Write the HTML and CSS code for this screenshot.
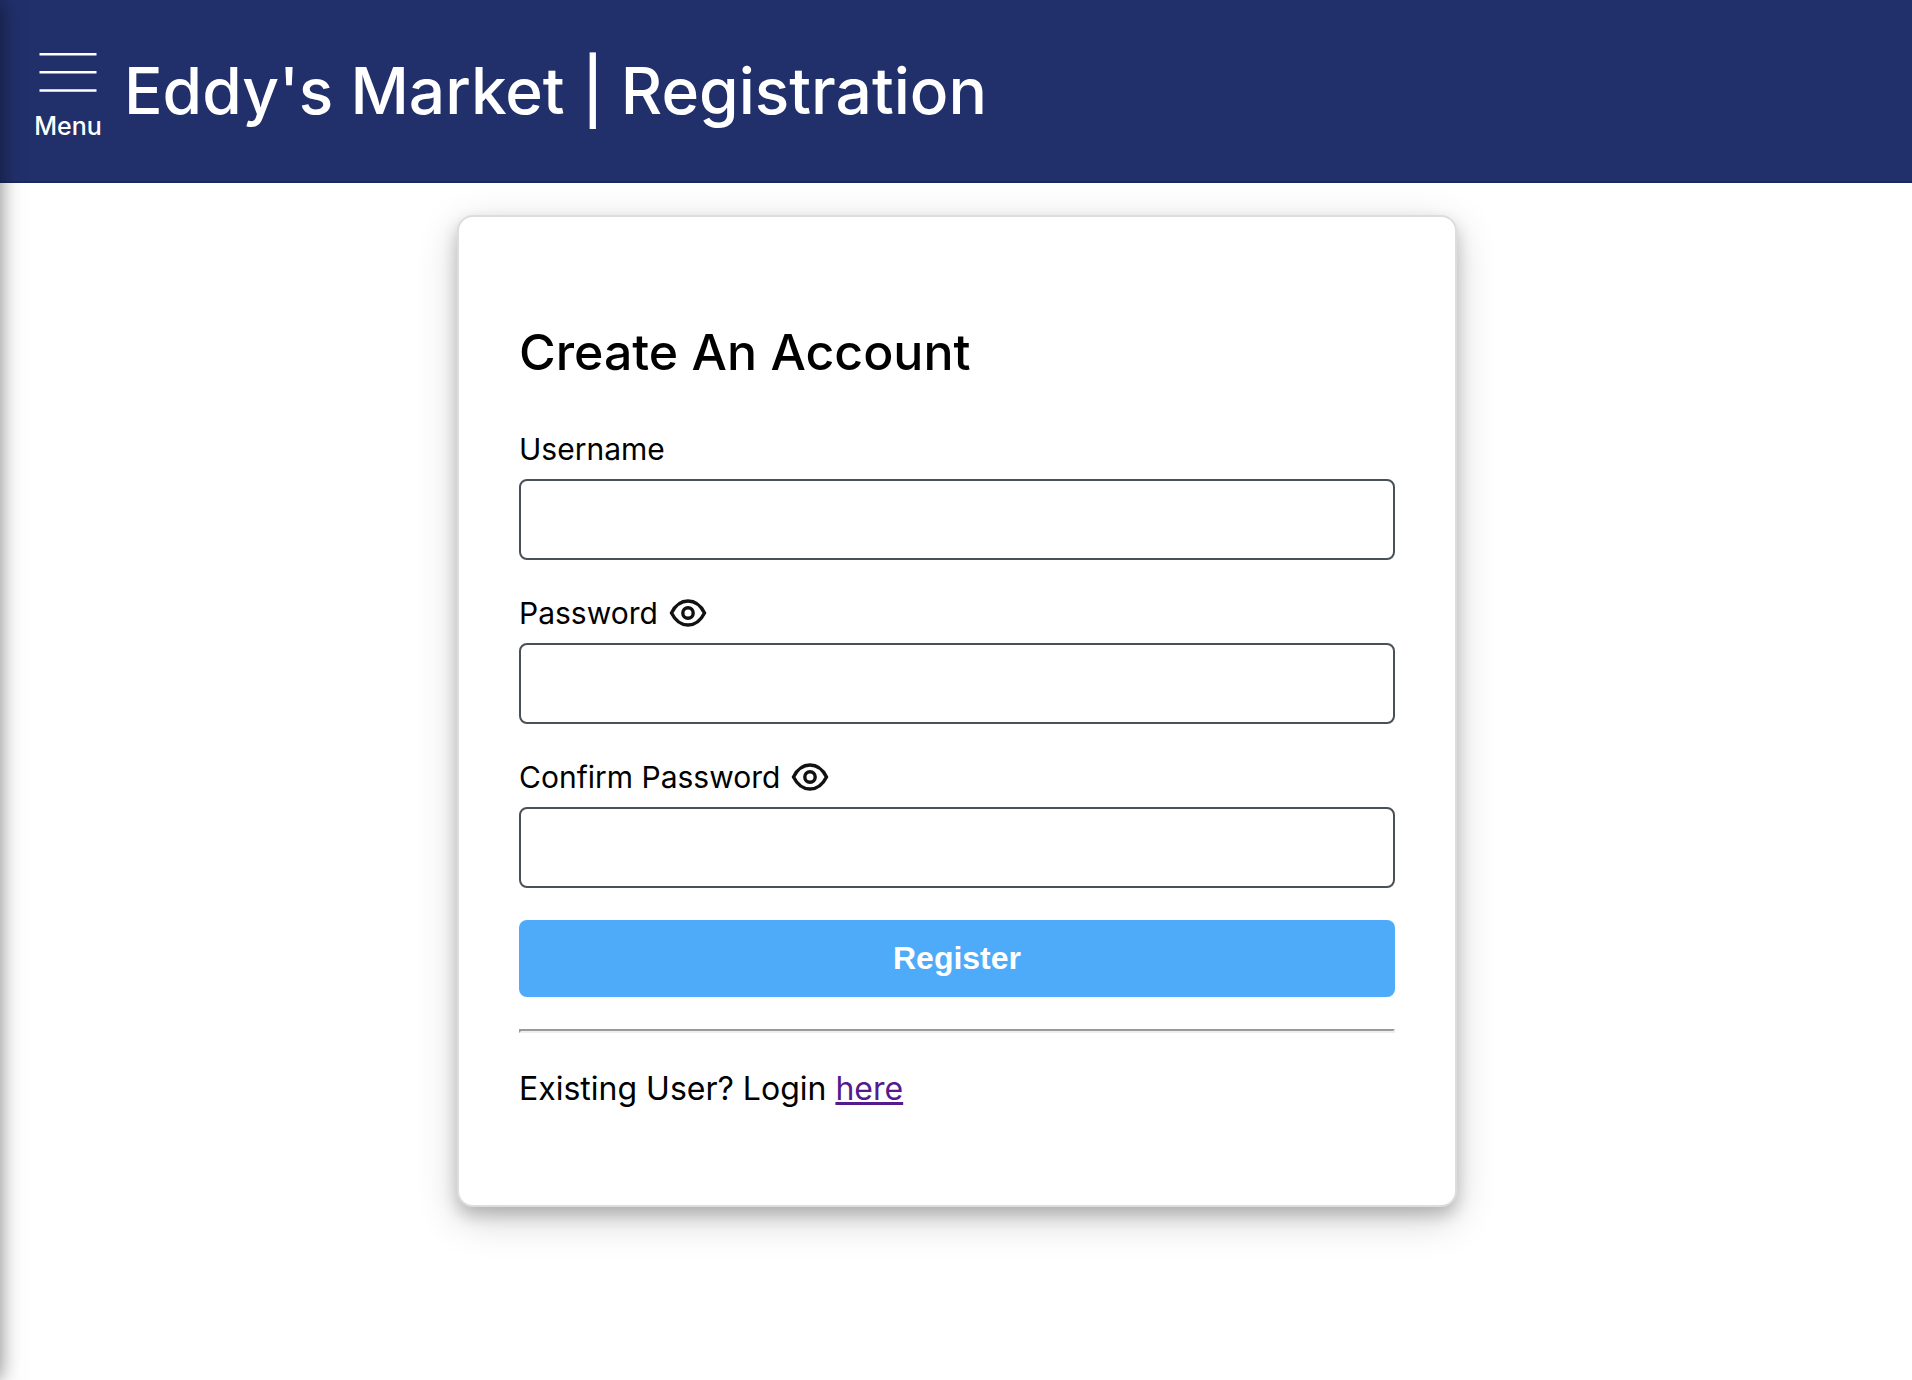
FILE: index.html
```html
<!DOCTYPE html>
<html lang="en">
<head>
  <meta charset="utf-8">
  <meta name="viewport" content="width=device-width, initial-scale=1">
  <title>Eddy's Market | Registration</title>
  <link rel="stylesheet" href="styles.css">
</head>
<body>
  <aside class="drawer"></aside>

  <header class="header">
    <button class="menu" type="button">
      <svg class="menu-icon" viewBox="0 0 58 42" aria-hidden="true">
        <path d="M.5 2.200H57.500M.5 20.300H57.500M.5 38.500H57.500"/>
      </svg>
      Menu
    </button>
    <h1 class="title">Eddy's Market | Registration</h1>
  </header>

  <main class="main">
    <form class="card">
      <h2 class="heading">Create An Account</h2>

      <div class="field">
        <div class="label-row"><label for="username">Username</label></div>
        <input class="input" id="username" type="text">
      </div>

      <div class="field">
        <div class="label-row">
          <label for="password">Password</label>
          <button class="eye" type="button" aria-label="Show password">
            <svg viewBox="0 0 38 28"><path d="M2.500 14C6 7 12 2 19 2S32 7 35.500 14C32 21 26 26 19 26S6 21 2.500 14Z"/><circle cx="19" cy="14" r="5.200"/></svg>
          </button>
        </div>
        <input class="input" id="password" type="password">
      </div>

      <div class="field">
        <div class="label-row">
          <label for="confirm">Confirm Password</label>
          <button class="eye" type="button" aria-label="Show confirmed password">
            <svg viewBox="0 0 38 28"><path d="M2.500 14C6 7 12 2 19 2S32 7 35.500 14C32 21 26 26 19 26S6 21 2.500 14Z"/><circle cx="19" cy="14" r="5.200"/></svg>
          </button>
        </div>
        <input class="input" id="confirm" type="password">
      </div>

      <button class="submit" type="submit">Register</button>
      <hr class="rule">
      <p class="login">Existing User? Login <a href="#login">here</a></p>
    </form>
  </main>
</body>
</html>
```

FILE: styles.css
```css
* {
  box-sizing: border-box;
}

body {
  display: flex;
  flex-direction: column;
  min-height: 100vh;
  margin: 0;
  background: #fff;
  color: #000;
  font-family: Inter, "Liberation Sans", sans-serif;
}

/* Closed side menu, parked just past the left edge */
.drawer {
  position: fixed;
  top: 0;
  bottom: 0;
  right: 100%;
  width: 400px;
  box-shadow: 0 0 20px rgba(0, 0, 0, 0.5);
  z-index: 2;
}

.header {
  display: flex;
  align-items: center;
  gap: 20px;
  padding: 44px 32px 39px;
  border-bottom: 2px solid #1d2860;
  background: #21306b;
  color: #fff;
}

.menu {
  display: flex;
  flex-direction: column;
  align-items: center;
  gap: 16px;
  width: 72px;
  padding: 8px 0 0;
  border: 0;
  background: none;
  color: inherit;
  font: 500 25px/32px Inter, sans-serif;
}

.menu-icon {
  width: 58px;
  height: 42px;
  fill: none;
  stroke: #fff;
  stroke-width: 2.4;
}

.title {
  margin: 0;
  padding-bottom: 4px;
  font-size: 64px;
  font-weight: 500;
  line-height: 92px;
}

.main {
  flex: 1;
  padding: 32px 32px 32px 34px;
}

.card {
  max-width: 1000px;
  margin: 0 auto;
  padding: 99px 60px 92px;
  border: 2px solid #ddd;
  border-radius: 16px;
  background: #fff;
  box-shadow: 0 8px 16px rgba(0, 0, 0, 0.2), 0 12px 40px rgba(0, 0, 0, 0.19);
}

.heading {
  margin: 0 0 40px;
  font-size: 50px;
  font-weight: 500;
  line-height: 72px;
}

.field {
  margin-bottom: 32px;
}

.label-row {
  display: flex;
  align-items: center;
  gap: 11px;
  height: 41px;
  margin-bottom: 10px;
  font-size: 30px;
}

.eye {
  display: flex;
  padding: 0;
  border: 0;
  background: none;
}

.eye svg {
  width: 38px;
  height: 28px;
  fill: none;
  stroke: #111;
  stroke-width: 3.4;
}

.input {
  display: block;
  width: 100%;
  height: 81px;
  padding: 0 24px;
  border: 2px solid #495057;
  border-radius: 8px;
  background: #fff;
  font: 32px Inter, sans-serif;
}

.submit {
  display: block;
  width: 100%;
  height: 77px;
  border: 0;
  border-radius: 8px;
  background: #4dabf9;
  color: #fff;
  font: bold 32px "Liberation Sans", Arial, sans-serif;
}

.rule {
  margin: 32px 0;
  border: 2px solid;
  border-color: #9a9a9a #eee #eee #9a9a9a;
}

.login {
  margin: 0;
  font-size: 32px;
  line-height: 48px;
}

.login a {
  color: #551a8b;
}
```
